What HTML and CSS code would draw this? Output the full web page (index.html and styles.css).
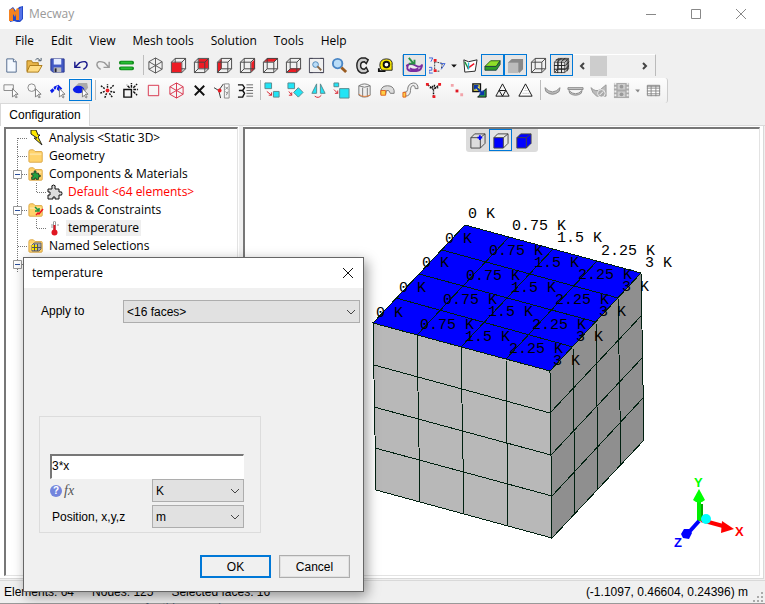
FILE: index.html
```html
<!DOCTYPE html>
<html lang="en">
<head>
<meta charset="utf-8">
<title>Mecway</title>
<link rel="stylesheet" href="styles.css">
</head>
<body>
<svg class="defs" aria-hidden="true">
  <symbol id="wire" viewBox="0 0 18 18"><path d="M1.500 5.500h11v11h-11zM5.500 1.500h11v11h-11zM1.500 5.500l4-4M12.500 5.500l4-4M1.500 16.500l4-4M12.500 16.500l4-4" fill="none" stroke="#444"/></symbol>
  <symbol id="solidcube" viewBox="0 0 18 18"><path d="M2 6h10v11H2zM2 6l4-4h11l-5 4M17 2v10l-5 5" fill="none" stroke="#444" stroke-width="1"/></symbol>
  <symbol id="cursor" viewBox="0 0 8 12"><path d="M1 1v9l2-2 2 3 1-1-2-3h3z" fill="#fff" stroke="#777"/></symbol>
  <symbol id="folder" viewBox="0 0 18 16"><path d="M1 3q0-2 2-2h3l2 2h7q1 0 1 1v10q0 1-1 1H2q-1 0-1-1z" fill="#ffd36b" stroke="#d9a441"/><path d="M2 5h13v2H2z" fill="#ffe39b"/></symbol>
  <symbol id="puzzle" viewBox="0 0 16 16"><path d="M1 5h4V4Q4 1 6.500 1T8 4v1h4v3h1q2-1 2 1.500T13 11h-1v4H8v-2H6v2H1v-4h2V8H1z" stroke="#111"/></symbol>
  <symbol id="chev" viewBox="0 0 10 6"><path d="M1 1l4 4 4-4" fill="none" stroke="#444"/></symbol>
  <symbol id="b-first" viewBox="0 0 22 18"><path d="M11.500 9v9M12 9.500h10" class="dots"/></symbol>
  <symbol id="b-mid" viewBox="0 0 22 18"><path d="M11.500 0v18M12 9.500h10" class="dots"/></symbol>
  <symbol id="b-exp" viewBox="0 0 22 18"><path d="M11.500 0v18M16 9.500h6" class="dots"/><path d="M7.500 5.500h8v8h-8z" fill="#fff" stroke="#999"/><path d="M9 9.500h5" stroke="#2b4f9c"/></symbol>
  <symbol id="b-child" viewBox="0 0 41 18"><path d="M11.500 0v18M30.500 0v10M31 9.500h10" class="dots"/></symbol>
</svg>

<header class="titlebar">
  <svg class="logo" width="16" height="16" viewBox="0 0 16 16"><path d="M1 4l4-3 3 4 3-4 4-1v13l-3 3H9l-3-1-4 1z" fill="#2449c8"/><path d="M1 4l4-2 2 4 2-4 2 1v11H8V8L7 11 5 8v7H1z" fill="#f58220"/><path d="M11 3l3-2v12l-3 2z" fill="#5472e8"/></svg>
  <span class="app-name">Mecway</span>
  <button class="win" aria-label="Minimize"><svg width="12" height="12"><path d="M1 6.500h10" stroke="#888"/></svg></button>
  <button class="win" aria-label="Maximize"><svg width="12" height="12"><path d="M1.500 1.500h9v9h-9z" fill="none" stroke="#888"/></svg></button>
  <button class="win" aria-label="Close"><svg width="12" height="12"><path d="M1 1l10 10M11 1L1 11" stroke="#888"/></svg></button>
</header>

<nav class="menu">
  <button>File</button><button>Edit</button><button>View</button><button>Mesh tools</button><button>Solution</button><button>Tools</button><button>Help</button>
</nav>

<div class="toolbar main-tools">
  <button aria-label="New"><svg viewBox="0 0 18 18"><path d="M4 2h7l3 3v11H4z" fill="#f4f9ff" stroke="#50688c"/><path d="M11 2v3h3" fill="#fff" stroke="#50688c"/></svg></button>
  <button aria-label="Open"><svg viewBox="0 0 18 18"><path d="M1 15V4h5l1 2h6v9z" fill="#e9b64a" stroke="#a97816"/><path d="M1 16l3-7h13l-4 7z" fill="#ffdc83" stroke="#a97816"/><path d="M10 3q3-3 5 1m1-3v3h-3" fill="none" stroke="#456"/></svg></button>
  <button aria-label="Save"><svg viewBox="0 0 18 18"><path d="M2 2h14v14H4l-2-2z" fill="#4259c5" stroke="#27358c"/><path d="M5 2h8v6H5z" fill="#e4ecff"/><path d="M5 11h8v5H5z" fill="#bbb"/><path d="M6 12h2v4H6z" fill="#223"/></svg></button>
  <button aria-label="Undo"><svg viewBox="0 0 18 18"><path d="M3 5v6h6M3 11l5-5q8-3 8 2 0 3-4 5" fill="none" stroke="#1a1a8c" stroke-width="1.500"/></svg></button>
  <button aria-label="Redo"><svg viewBox="0 0 18 18"><path d="M15 5v6H9M15 11l-5-5Q2 3 2 8q0 3 4 5" fill="none" stroke="#999" stroke-width="1.500"/></svg></button>
  <button aria-label="Solve"><svg viewBox="0 0 18 18"><path d="M3 6h12M3 12h12" stroke="#138c1e" stroke-width="4" stroke-linecap="round"/><path d="M3 6h12M3 12h12" stroke="#27bd32" stroke-width="2"/></svg></button>
  <i class="sep"></i>
  <button aria-label="Isometric view"><svg viewBox="0 0 18 18"><path d="M9 1l7 4v8l-7 4-7-4V5zM9 1v16M2 5l14 8M16 5L2 13" fill="none" stroke="#555"/></svg></button>
  <button aria-label="Front view"><svg viewBox="0 0 18 18"><use href="#wire"/><path d="M2 6h10v10H2z" fill="#ed1c24"/></svg></button>
  <button aria-label="Back view"><svg viewBox="0 0 18 18"><path d="M6 2h10v10H6z" fill="#ed1c24"/><use href="#wire"/></svg></button>
  <button aria-label="Left view"><svg viewBox="0 0 18 18"><path d="M2 6l4-4v10l-4 4z" fill="#ed1c24"/><use href="#wire"/></svg></button>
  <button aria-label="Right view"><svg viewBox="0 0 18 18"><path d="M13 6l4-4v10l-4 4z" fill="#ed1c24"/><use href="#wire"/></svg></button>
  <button aria-label="Top view"><svg viewBox="0 0 18 18"><path d="M2 5l4-4h11l-4 4z" fill="#ed1c24"/><use href="#wire"/></svg></button>
  <button aria-label="Bottom view"><svg viewBox="0 0 18 18"><path d="M2 16l4-4h11l-4 4z" fill="#ed1c24"/><use href="#wire"/></svg></button>
  <button aria-label="Zoom to fit"><svg viewBox="0 0 18 18"><path d="M5 1.500H1.500v15H5M13 1.500h3.500v15H13M1.500 1.500h15M1.500 16.500h15" fill="none" stroke="#445"/><circle cx="8" cy="8" r="3" fill="#b9dcf7" stroke="#4f86b5"/><path d="M10 10l4 4" stroke="#864" stroke-width="2"/></svg></button>
  <button aria-label="Zoom"><svg viewBox="0 0 18 18"><circle cx="7" cy="7" r="5" fill="#b9dcf7" stroke="#4a86c5" stroke-width="2"/><path d="M11 11l5 5" stroke="#9a5b20" stroke-width="3"/></svg></button>
  <button aria-label="Rotate"><svg viewBox="0 0 18 18"><path d="M15 3l-2 4-2-2q-4 0-4 4t4 4l2-2 2 4-3 2H8q-5-2-5-8t5-8h4z" fill="#ccc" stroke="#222" stroke-width="1.500"/></svg></button>
  <button aria-label="Measure"><svg viewBox="0 0 18 18"><path d="M3 9q0-7 7-7t6 7v5H6q-3-1-3-5z" fill="#f7e600" stroke="#222"/><circle cx="10" cy="8" r="3" fill="#fff" stroke="#111" stroke-width="2"/><path d="M1 15h8M2 12v3" stroke="#111" stroke-width="2"/></svg></button>
  <i class="sep"></i>
  <button class="on" aria-label="Show loads"><svg viewBox="0 0 18 18"><path d="M1 9q4-3 9 0t7-1q0 6-6 7H5q-5-1-3-6zM4 12q5 3 9 0" fill="#eee" stroke="#7a2ca0" stroke-width="2"/><path d="M3 1l5 6M3 7h6V3" fill="none" stroke="#299044" stroke-width="2"/></svg></button>
  <button aria-label="Node numbers"><svg viewBox="0 0 18 18"><path d="M6 5v9M6 5l9 2M6 15h6M14 7l-1 6" fill="none" stroke="#333" stroke-dasharray="2 1"/><path d="M0 1h4L2 5M12 7h5l-4 6M0 11h3v3H0v3h4" fill="none" stroke="#3b61d8"/><path d="M5 2h3v3H5zM5 13h3v3H5z" fill="#ed1c24"/></svg></button>
  <button class="drop" aria-label="Number options"><svg viewBox="0 0 8 18"><path d="M1 8h6l-3 3z" fill="#111"/></svg></button>
  <button aria-label="Local axes"><svg viewBox="0 0 18 18"><path d="M3 3l5 2 9-2-2 12-11 1z" fill="#fff" stroke="#222"/><path d="M4 5l4 8" stroke="#168f36" stroke-width="1.500"/><path d="M7 12l7-5" stroke="#e12" stroke-width="1.500"/><path d="M8 6v7" stroke="#2bd" stroke-width="1.500"/></svg></button>
  <button class="on" aria-label="Shell thickness"><svg viewBox="0 0 18 18"><path d="M1 10l6-6h10l-4 6z" fill="#8fdf28" stroke="#275d13"/><path d="M1 10h12l4-6v4l-4 6H1z" fill="#2e9d28" stroke="#244"/></svg></button>
  <button class="on" aria-label="Shaded"><svg viewBox="0 0 18 18"><path d="M1 6l4-4h12v11l-4 4z" fill="#888"/><path d="M1 6h11v11H1z" fill="#bbb"/></svg></button>
  <button aria-label="Wireframe"><svg viewBox="0 0 18 18"><use href="#wire"/></svg></button>
  <button class="on" aria-label="Element edges"><svg viewBox="0 0 18 18"><use href="#wire"/><path d="M1 9h12l4-4M1 13h12l4-4M5 5v12M9 5v12M5 5l4-4M9 5l4-4M3 3h12v12" fill="none" stroke="#222"/></svg></button>
  <div class="scroller"><button aria-label="Previous"><svg viewBox="0 0 6 8"><path d="M5 1L2 4l3 3" fill="none" stroke="#444" stroke-width="2"/></svg></button><span class="thumb"></span><button aria-label="Next"><svg viewBox="0 0 6 8"><path d="M1 1l3 3-3 3" fill="none" stroke="#444" stroke-width="2"/></svg></button></div>
</div>

<div class="toolbar edit-tools">
  <button aria-label="Select box"><svg viewBox="0 0 18 18"><path d="M1 3h10v6H1z" fill="none" stroke="#888"/><use href="#cursor" x="9" y="6" width="8" height="12"/></svg></button>
  <button aria-label="Select circle"><svg viewBox="0 0 18 18"><circle cx="6" cy="6" r="4" fill="none" stroke="#888"/><use href="#cursor" x="9" y="6" width="8" height="12"/></svg></button>
  <button aria-label="Select surface"><svg viewBox="0 0 18 18"><path d="M1 9l5-4 2 2-5 5zM5 5l5-2 4 4-3 3-4-3z" fill="#0a1de8"/><path d="M4 6l3 4M9 4L7 9" stroke="#fff"/><use href="#cursor" x="10" y="6" width="8" height="12"/></svg></button>
  <button class="on" aria-label="Select faces"><svg viewBox="0 0 18 18"><path d="M3 5l4-4h9l1 5-4 5-8-3z" fill="#aaa"/><ellipse cx="7" cy="8" rx="6" ry="4" fill="#0a1de8"/><use href="#cursor" x="10" y="6" width="8" height="12"/></svg></button>
  <i class="sep"></i>
  <button aria-label="New node"><svg viewBox="0 0 18 18"><path d="M9 6V2M12 7l4-4M12 10l5 1M11 12l3 4M8 12l-2 5M6 10l-5 2M6 7L2 4" stroke="#111" stroke-width="1.500" stroke-dasharray="2 1"/><circle cx="9" cy="9" r="2" fill="#ed1c24"/></svg></button>
  <button aria-label="New element"><svg viewBox="0 0 18 18"><path d="M2 8h8v8H2z" fill="none" stroke="#111" stroke-width="1.500"/><path d="M10 6V1M12 6l4-4M12 8h5M12 10l4 4M8 6L5 3" stroke="#111" stroke-width="1.500" stroke-dasharray="3 1"/></svg></button>
  <button aria-label="Quad"><svg viewBox="0 0 18 18"><path d="M3.500 3.500h11v11h-11z" fill="none" stroke="#d8324a"/></svg></button>
  <button aria-label="Hexahedron"><svg viewBox="0 0 18 18"><path d="M9 1l7 4v8l-7 4-7-4V5zM9 1v16M2 5l14 8M16 5L2 13" fill="none" stroke="#d8324a"/></svg></button>
  <button aria-label="Delete"><svg viewBox="0 0 18 18"><path d="M4 4l10 10M14 4L4 14" stroke="#111" stroke-width="2"/></svg></button>
  <button aria-label="Node coordinates"><svg viewBox="0 0 18 18"><path d="M0 6l5 3 5-7M5 9l2 8" fill="none" stroke="#333"/><circle cx="6" cy="9" r="2" fill="#ed1c24"/><path d="M11 2h5v15h-5zM12 5l3 3m0-3l-3 3M12 10l2 2m1-2l-2 4" fill="none" stroke="#888"/></svg></button>
  <button aria-label="Element properties"><svg viewBox="0 0 18 18"><path d="M1 3h5l2 3-2 3H2M6 9l2 3-2 4H1" fill="none" stroke="#111" stroke-width="1.500"/><path d="M10 3h7M10 6h7M10 9h7M10 12h7M10 15h7" stroke="#666"/></svg></button>
  <i class="sep"></i>
  <button aria-label="Move"><svg viewBox="0 0 18 18"><path d="M1 1h7v6H1zM10 10h6v6h-6z" class="cy"/><path d="M3 10l5 4m0-3v3H5" class="rd"/></svg></button>
  <button aria-label="Rotate mesh"><svg viewBox="0 0 18 18"><path d="M1 1h7v6H1zM12 6l5 5-5 5-5-5z" class="cy"/><path d="M2 10l3 4m0-3v3H2" class="rd"/></svg></button>
  <button aria-label="Mirror"><svg viewBox="0 0 18 18"><path d="M7 2v10H2zM11 2v10h5z" class="cy"/><path d="M5 15q4 3 7-1" class="rd"/></svg></button>
  <button aria-label="Scale"><svg viewBox="0 0 18 18"><path d="M1 1h5v4H1zM7 7h10v10H7z" class="cy"/><path d="M1 8l4 4m0-3v3H2" class="rd"/></svg></button>
  <button aria-label="Extrude"><svg viewBox="0 0 18 18"><path d="M3 4q6-4 12 0v10q-6 4-12 0zM3 4q6 3 12 0M7 6v10M12 6v10" fill="#eee" stroke="#777"/><path d="M3 13q5 4 12 1" fill="none" stroke="#e8803a"/></svg></button>
  <button aria-label="Revolve"><svg viewBox="0 0 18 18"><path d="M2 13V9q1-5 7-5t7 5v3h-4q-1-4-4-3l-1 4z" fill="#ddd" stroke="#777"/><path d="M2 9h5v5H2z" fill="#ffcf45" stroke="#e06020"/></svg></button>
  <button aria-label="Sweep"><svg viewBox="0 0 18 18"><path d="M3 15q6 0 6-6t4-5q1 1 1 3h3q0-6-5-6-6 1-6 7 0 3-4 3z" fill="#eee" stroke="#777"/><path d="M1 11h3v5H1z" fill="#ffcf45" stroke="#e06020"/></svg></button>
  <button aria-label="Merge nodes"><svg viewBox="0 0 18 18"><path d="M3 3l6 5 6-5M9 16V9M5 6h3V3M10 3v3h4" fill="none" stroke="#111" stroke-width="1.500" stroke-dasharray="2 1"/><path d="M1 1h3v3H1zM14 1h3v3h-3zM8 14h3v3H8z" fill="#ed1c24"/></svg></button>
  <button aria-label="Node between"><svg viewBox="0 0 18 18"><path d="M3 2h3v3H3zM13 12h3v3h-3z" fill="#f2a4aa"/><path d="M8 8h3v3H8z" fill="#e01722"/></svg></button>
  <button aria-label="Refine"><svg viewBox="0 0 18 18"><path d="M7 16l9-9v9z" fill="#2a9b49" stroke="#111"/><path d="M2 2h8v8H2z" fill="#fff45c" stroke="#111" stroke-width="1.500"/><path d="M4 4l9 9M4 8V4h4M13 9v4H9" fill="none" stroke="#0b36a8" stroke-width="2"/></svg></button>
  <button aria-label="Subdivide"><svg viewBox="0 0 18 18"><path d="M9 2l7 13H2zM5.500 9h7L9 15z" fill="none" stroke="#111"/></svg></button>
  <button aria-label="Tetrahedral mesh"><svg viewBox="0 0 18 18"><path d="M9 2l7 13H2z" fill="#fff" stroke="#111"/><path d="M6 12h7M8 9h3M9 6v1" stroke="#aaa" stroke-dasharray="1 1"/></svg></button>
  <i class="sep"></i>
  <button aria-label="Deformed view"><svg viewBox="0 0 18 18"><path d="M1 6q8 9 16 0l-1 4q-7 6-14 0z" fill="#bbb" stroke="#888"/></svg></button>
  <button aria-label="Undeformed view"><svg viewBox="0 0 18 18"><path d="M1 6h16v2H1zM2 9q7 7 14 0l-1 3q-6 4-12 0z" fill="#ccc" stroke="#888"/></svg></button>
  <button aria-label="Animate settings"><svg viewBox="0 0 18 18"><path d="M1 6q5 5 10 2l6-5v12H7l-4-4z" fill="#bbb" stroke="#999"/><circle cx="12" cy="12" r="4" fill="#aaa" stroke="#eee"/><path d="M10 14l4-4" stroke="#fff"/></svg></button>
  <button aria-label="Animate"><svg viewBox="0 0 18 18"><path d="M1 1h16v16H1z" fill="#aaa"/><path d="M2.500 1v16M15.500 1v16" stroke="#eee" stroke-width="2" stroke-dasharray="2 2"/><path d="M5 2h8v6H5zM5 10h8v6H5z" fill="#ccc"/><circle cx="9" cy="5" r="2" fill="#999"/><circle cx="9" cy="13" r="2" fill="#999"/></svg></button>
  <button class="drop" aria-label="Animate options"><svg viewBox="0 0 8 18"><path d="M1 8h5l-2 3z" fill="#888"/></svg></button>
  <button aria-label="Table"><svg viewBox="0 0 18 18"><path d="M2 3h14v12H2z" fill="#fff"/><path d="M2.500 3.500h13v11h-13zM2 6.500h14M2 9.500h14M2 12.500h14M6.500 4v11M11.500 4v11M2 4.500h14" fill="none" stroke="#888"/></svg></button>
</div>

<div class="tabs"><button class="tab">Configuration</button></div>

<main class="page">
  <ul class="tree">
    <li><svg class="branch"><use href="#b-first"/></svg><svg class="ico" viewBox="0 0 16 16"><path d="M3 0h5l2 5h2l-2 2 4 8-8-7h3L3 4z" fill="#ffe800" stroke="#222"/></svg><span>Analysis &lt;Static 3D&gt;</span></li>
    <li><svg class="branch"><use href="#b-mid"/></svg><svg class="ico"><use href="#folder"/></svg><span>Geometry</span></li>
    <li><svg class="branch"><use href="#b-exp"/></svg><svg class="ico" viewBox="0 0 16 16"><use href="#folder"/><use href="#puzzle" x="3" y="4" width="10" height="10" fill="#22a040"/></svg><span>Components &amp; Materials</span></li>
    <li class="child"><svg class="branch"><use href="#b-child"/></svg><svg class="ico" fill="#ddd"><use href="#puzzle"/></svg><span class="error">Default &lt;64 elements&gt;</span></li>
    <li><svg class="branch"><use href="#b-exp"/></svg><svg class="ico" viewBox="0 0 16 16"><use href="#folder"/><path d="M7 5l3 3M7 9h4V6" fill="none" stroke="#16923c" stroke-width="1.500"/><path d="M8 13l2-2 1 1 4-5" fill="none" stroke="#e12" stroke-width="1.500"/></svg><span>Loads &amp; Constraints</span></li>
    <li class="child"><svg class="branch"><use href="#b-child"/></svg><svg class="ico" viewBox="0 0 16 16"><path d="M6.500 2q1-2 2 0v9h-2z" fill="#fff" stroke="#999"/><path d="M7.500 5v7" stroke="#e01722" stroke-width="2"/><circle cx="7.500" cy="12.500" r="3" fill="#e01722"/><path d="M4 5h2M4 7h2M10 5h2" stroke="#999"/></svg><span class="selected">temperature</span></li>
    <li><svg class="branch"><use href="#b-mid"/></svg><svg class="ico" viewBox="0 0 16 16"><use href="#folder"/><path d="M4 7l2-2h7v6l-2 2H4z" fill="#aaa" stroke="#666"/><path d="M4 7h5v5H4z" fill="#ffe800"/><path d="M4 9.500h9M6.500 6v7M9.500 6v7" stroke="#555"/></svg><span>Named Selections</span></li>
    <li><svg class="branch"><use href="#b-exp"/></svg><svg class="ico"><use href="#folder"/></svg></li>
  </ul>

  <section class="viewport">
    <svg class="scene" viewBox="245 129 514 446" role="img" aria-label="Meshed cube with temperature values">
      <g stroke="#002010" shape-rendering="crispEdges">
        <path d="M373 323L550 371 552 538 376 490z" fill="#b8b8b8"/>
        <path d="M550 371L641 273 644 440 552 538z" fill="#8f8f8f"/>
        <path d="M465 225L641 273 550 371 373 323z" fill="#00f"/>
        <path fill="none" d="M417 335L420 502M461 347L464 514M506 359L508 526M374 365L550 413M374 407L551 455M375 448L552 496M573 347L575 514M596 322L598 489M618 298L621 465M550 413L642 315M551 455L643 357M552 496L643 398M442 250L618 298M419 274L596 322M396 298L573 347M417 335L509 237M461 347L553 249M506 359L597 261"/>
      </g>
      <g class="values">
        <text x="468" y="218">0 K</text><text x="512" y="230">0.75 K</text><text x="557" y="242">1.5 K</text><text x="601" y="255">2.25 K</text><text x="645" y="267">3 K</text>
        <text x="445" y="243">0 K</text><text x="489" y="255">0.75 K</text><text x="534" y="267">1.5 K</text><text x="578" y="279">2.25 K</text><text x="622" y="291">3 K</text>
        <text x="422" y="267">0 K</text><text x="466" y="280">0.75 K</text><text x="511" y="292">1.5 K</text><text x="555" y="304">2.25 K</text><text x="599" y="316">3 K</text>
        <text x="399" y="292">0 K</text><text x="443" y="304">0.75 K</text><text x="488" y="316">1.5 K</text><text x="532" y="329">2.25 K</text><text x="576" y="341">3 K</text>
        <text x="376" y="317">0 K</text><text x="420" y="329">0.75 K</text><text x="465" y="341">1.5 K</text><text x="509" y="353">2.25 K</text><text x="553" y="365">3 K</text>
      </g>
      <path d="M697 497h4v24h-4z" fill="#0e0"/><path d="M701 504h2v14h-2z" fill="#0a0"/><path d="M699 489l6 11q-6 5-12 0z" fill="#0f0"/>
      <path d="M701 520l22 6" stroke="#f00" stroke-width="4"/><path d="M722 521l12 8-13 4z" fill="#f00"/>
      <path d="M699 521l-9 10" stroke="#00f" stroke-width="4"/><path d="M684 529h6l2 4-3 6-6-1-2-4z" fill="#00f"/>
      <circle cx="706" cy="519" r="5" fill="#0ff"/>
      <g class="axes"><text x="694" y="487" fill="#0f0">Y</text><text x="735" y="536" fill="#f00">X</text><text x="674" y="547" fill="#00f">Z</text></g>
    </svg>
    <div class="select-mode">
      <button aria-label="Select nodes"><svg viewBox="0 0 18 18"><use href="#solidcube"/><path d="M9 6h5M11.500 3.500v5" stroke="#00f" stroke-width="2"/></svg></button>
      <button class="on" aria-label="Select faces"><svg viewBox="0 0 18 18"><path d="M2 6h10v11H2z" fill="#00f"/><use href="#solidcube"/></svg></button>
      <button aria-label="Select elements"><svg viewBox="0 0 18 18"><path d="M2 6l4-4h11v10l-5 5H2z" fill="#00f"/><use href="#solidcube"/></svg></button>
    </div>
  </section>
</main>

<footer class="status"><span>Elements: 64</span><span>Nodes: 125</span><span>Selected faces: 16</span><span class="coords">(-1.1097, 0.46604, 0.24396) m</span><svg class="grip" width="12" height="12"><path d="M9 1h2v2H9zM5 5h2v2H5zM9 5h2v2H9zM1 9h2v2H1zM5 9h2v2H5zM9 9h2v2H9z" fill="#aaa"/></svg></footer>
<p class="behind">for this procedure.</p>

<div class="dialog" role="dialog" aria-labelledby="dlg-title">
  <div class="dlg-head"><span id="dlg-title">temperature</span><button aria-label="Close dialog"><svg width="12" height="12"><path d="M1 1l10 10M11 1L1 11" stroke="#111"/></svg></button></div>
  <form class="dlg-body">
    <div class="apply"><label for="target">Apply to</label><div class="pick"><select id="target"><option>&lt;16 faces&gt;</option></select><svg class="chev"><use href="#chev"/></svg></div></div>
    <div class="group">
      <input class="formula" type="text" value="3*x" aria-label="Temperature formula">
      <div class="unit"><label class="fx" for="unit-t"><svg width="12" height="12"><circle cx="6" cy="6" r="6" fill="#7385dd"/></svg><b>?</b><em>fx</em></label><div class="pick"><select id="unit-t"><option>K</option></select><svg class="chev"><use href="#chev"/></svg></div></div>
      <div class="unit"><label for="unit-p">Position, x,y,z</label><div class="pick"><select id="unit-p"><option>m</option></select><svg class="chev"><use href="#chev"/></svg></div></div>
    </div>
    <div class="actions"><button type="button" class="ok">OK</button><button type="button">Cancel</button></div>
  </form>
</div>
</body>
</html>
```
FILE: styles.css
```css
* { box-sizing: border-box; }
body { margin: 0; height: 100vh; display: flex; flex-direction: column; overflow: hidden; background: #f0f0f0; color: #000; font: 12px/18px "Liberation Sans", Arial, sans-serif; border-bottom: 1px solid #999; }
button { border: 0; padding: 0; background: none; font: inherit; color: inherit; }
.defs { position: absolute; width: 0; height: 0; }
.dots { fill: none; stroke: #777; stroke-dasharray: 1 1; }
.cy { fill: #22e4f5; stroke: #57888c; }
.rd { fill: none; stroke: #d8202c; }

.titlebar { flex: none; height: 29px; display: flex; align-items: center; padding: 0 2px 2px 8px; background: #fff; color: #999; font-family: "Open Sans", "Noto Sans", sans-serif; }
.app-name { flex: 1; margin-left: 5px; }
.win { width: 45px; height: 26px; display: grid; place-items: center; }

.menu { flex: none; height: 24px; display: flex; gap: 17px; padding-left: 15px; font-family: "Open Sans", "Noto Sans", sans-serif; }

.toolbar { flex: none; height: 25px; display: flex; align-items: center; padding-bottom: 1px; }
.toolbar > button, .select-mode button { flex: none; width: 23px; height: 22px; display: grid; place-items: center; border: 1px solid transparent; }
.toolbar > button svg, .select-mode svg { width: 17px; height: 17px; }
.toolbar > .drop { width: 9px; border: 0; }
.toolbar > .drop svg { width: 8px; }
.toolbar > .on, .select-mode .on { border-color: #0078d7; background: #e5e5e5; }
.sep { flex: none; width: 4px; height: 20px; border-right: 1px solid #bdbdbd; }
.main-tools .sep { width: 6px; }
.edit-tools { align-self: flex-start; padding-right: 2px; background: linear-gradient(#fdfdfd, #f0f0f0); border-right: 1px solid #ccc; border-radius: 0 3px 3px 0; }
.scroller { display: flex; width: 83px; height: 22px; align-items: center; border-top: 1px solid #fff; border-right: 1px solid #bbb; }
.scroller button { width: 17px; display: grid; place-items: center; }
.scroller svg { width: 6px; height: 8px; }
.thumb { width: 17px; height: 20px; margin-right: auto; background: #cdcdcd; }
.scroller button:last-child { width: 20px; }

.tabs { flex: none; height: 23px; display: flex; border-bottom: 1px solid #d9d9d9; }
.tab { width: 90px; height: 23px; background: #fff; border: 1px solid #d9d9d9; border-bottom: 0; }

.page { flex: 1; min-height: 0; display: grid; grid-template-columns: 234px 1fr; gap: 5px; padding: 1px 3px 2px 4px; margin-right: 1px; background: linear-gradient(90deg, #fff 239px, #f0f0f0 239px 243px, #fff 243px); border: 1px solid #d9d9d9; border-top: 0; border-left: 0; }
.tree, .viewport { margin: 0; background: #fff; border: 1px solid #e3e3e3; border-top: 2px solid #777; border-left: 2px solid #777; min-height: 0; overflow: hidden; }
.tree { list-style: none; padding: 0; font-family: "Open Sans", "Noto Sans", sans-serif; }
.tree li { display: flex; height: 18px; align-items: center; }
.branch { flex: none; width: 22px; height: 18px; }
.child .branch { width: 41px; }
.ico { flex: none; width: 16px; height: 16px; margin-right: 3px; }
.tree span { padding: 0 2px; line-height: 16px; white-space: nowrap; }
.tree .error { color: #f00; }
.tree .selected { background: #efefef; }

.viewport { position: relative; }
.scene { display: block; width: 100%; height: 100%; }
.values { font: 15px "Liberation Mono", monospace; fill: #000; }
.axes { font: bold 13px "Liberation Sans", sans-serif; }
.select-mode { position: absolute; top: 0; left: 50%; transform: translateX(-50%); display: flex; padding: 0 3px 1px 0; background: #dcdcdc; border-radius: 0 0 3px 3px; }

.status { flex: none; height: 23px; margin-top: 1px; display: flex; align-items: center; gap: 18px; padding: 0 1px 0 4px; border-top: 1px solid #d9d9d9; white-space: nowrap; }
.coords { margin-left: auto; }
.grip { align-self: flex-end; margin-left: -14px; }
.behind { position: absolute; bottom: 0; left: 145px; height: 3px; margin: 0; overflow: hidden; color: #456; line-height: 14px; }

.dialog { position: absolute; left: 23px; top: 257px; width: 341px; background: #f0f0f0; border: 1px solid #666; box-shadow: 3px 4px 12px rgba(0, 0, 0, .4); }
.dlg-head { height: 30px; display: flex; align-items: center; justify-content: space-between; padding: 0 9px 0 8px; background: #fff; font-family: "Open Sans", "Noto Sans", sans-serif; }
.dlg-head button { display: grid; }
.dlg-body { padding: 12px 3px 13px 15px; }
.apply { display: flex; justify-content: space-between; padding-left: 2px; }
.apply label { line-height: 22px; }
.apply .pick { width: 237px; }
.pick { display: grid; align-items: center; }
.pick select, .chev { grid-area: 1 / 1; }
.pick select { appearance: none; width: 100%; height: 23px; padding: 0 3px; margin: 0; border: 1px solid #adadad; border-radius: 0; background: #e1e1e1; color: #000; font: inherit; }
.chev { justify-self: end; width: 10px; height: 6px; margin-right: 4px; pointer-events: none; }
.group { width: 222px; height: 117px; margin-top: 93px; padding: 37px 16px 0 10px; border: 1px solid #dcdcdc; }
.formula { display: block; width: 100%; height: 25px; padding: 0 0 3px; border: 1px solid #fff; border-top: 2px solid #777; border-left: 2px solid #777; background: #fff; font: inherit; }
.unit { display: flex; justify-content: space-between; align-items: center; margin-bottom: 3px; }
.unit label { padding-left: 2px; }
.unit .pick { width: 92px; }
.unit .fx { display: flex; align-items: center; padding: 0; }
.fx b { width: 12px; margin-left: -12px; color: #fff; font-size: 10px; text-align: center; }
.fx em { margin-left: 2px; color: #555; font: italic 14px "Liberation Serif", serif; }
.actions { display: flex; justify-content: flex-end; gap: 8px; margin-top: 22px; padding-right: 10px; }
.actions button { width: 71px; height: 23px; border: 1px solid #adadad; background: #f0f0f0; box-shadow: inset 0 0 0 1px #e1e1e1; }
.actions .ok { border: 2px solid #0078d7; box-shadow: none; }
```
